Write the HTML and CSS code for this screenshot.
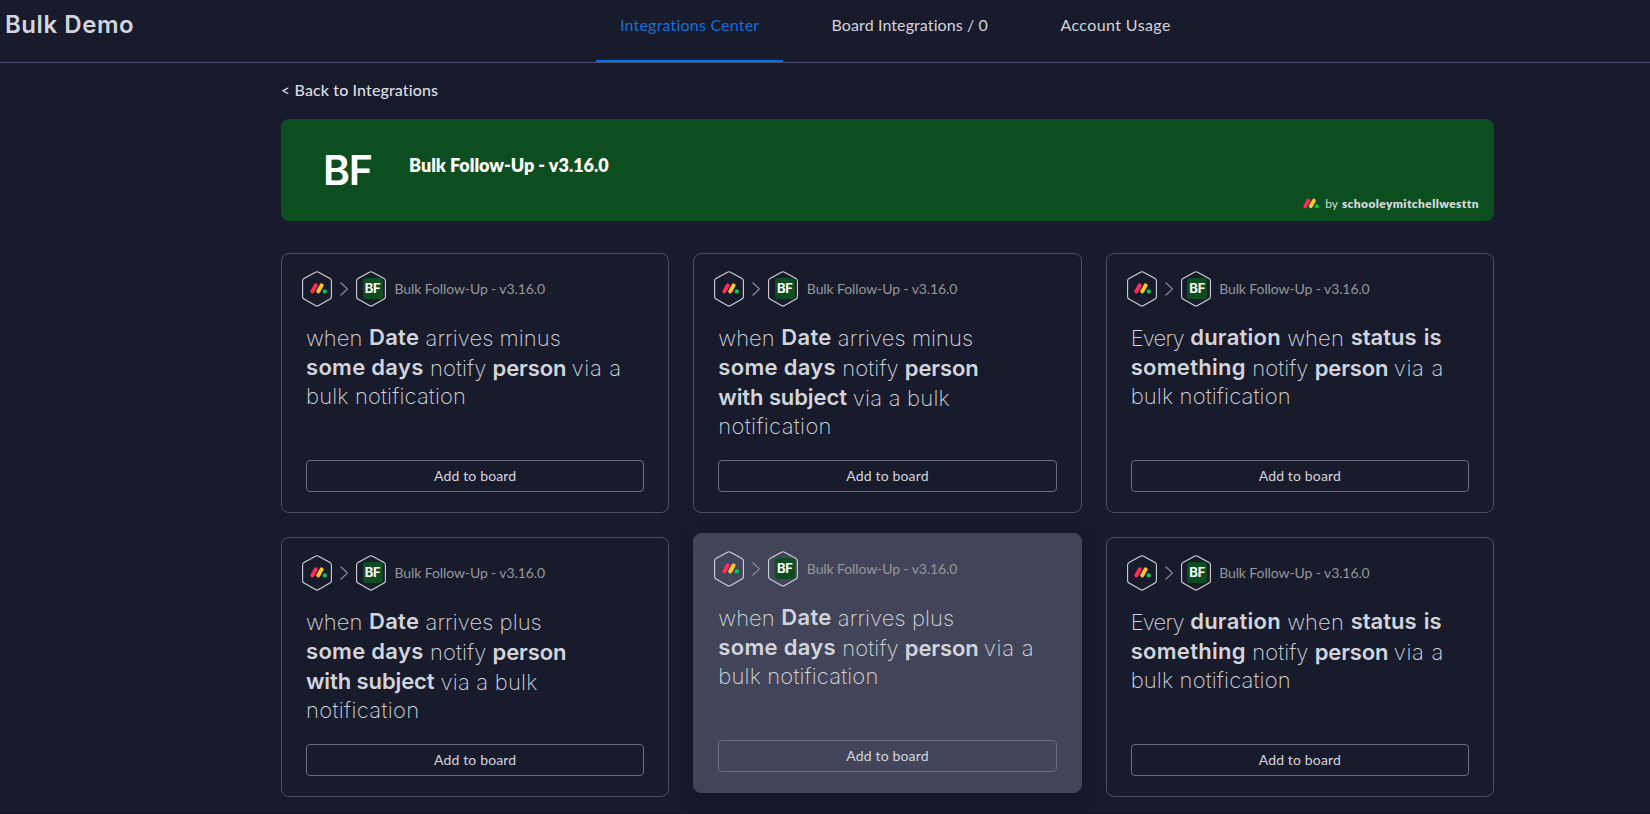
FILE: index.html
```html
<!DOCTYPE html>
<html lang="en">
<head>
<meta charset="utf-8">
<title>Bulk Demo</title>
<link rel="stylesheet" href="styles.css">
</head>
<body>
<svg class="defs" width="0" height="0">
  <symbol id="logo" viewBox="0 0 17 11">
    <path d="M2.4 8.4 5.7 2.4" stroke="#ff2d57" stroke-width="4" stroke-linecap="round"/>
    <path d="M8.3 8.4 11.6 2.4" stroke="#ffc52e" stroke-width="4" stroke-linecap="round"/>
    <circle cx="14.8" cy="8.4" r="2.1" fill="#00d052"/>
  </symbol>
  <symbol id="hex" viewBox="0 0 30 36">
    <path d="M13.4 1.2Q15 .3 16.6 1.2L28 7.5Q29.4 8.3 29.4 9.9V25.7Q29.4 27.3 28 28.1L16.6 34.6Q15 35.5 13.4 34.6L2 28.1Q.6 27.3 .6 25.7V9.9Q.6 8.3 2 7.5Z" fill="none" stroke="#d0d1d6" stroke-width="1.1"/>
  </symbol>
  <symbol id="chevron" viewBox="0 0 8 14">
    <path d="M.5.5 7.5 7 .5 13.5" fill="none" stroke="#8c8d94" stroke-width="1.2"/>
  </symbol>
</svg>
<header class="topbar">
  <h1 class="brand">Bulk Demo</h1>
  <nav class="tabs">
    <a class="tab active">Integrations Center</a>
    <a class="tab">Board Integrations / 0</a>
    <a class="tab usage">Account Usage</a>
  </nav>
</header>
<main class="content">
  <a class="back"><span class="lt">&lt;</span>Back to Integrations</a>
  <section class="banner">
    <div class="initials">BF</div>
    <h2 class="banner-title">Bulk Follow-Up - v3.16.0</h2>
    <div class="author"><svg class="author-logo"><use href="#logo"/></svg><span class="by">by</span><b>schooleymitchellwesttn</b></div>
  </section>
  <section class="grid" id="grid"></section>
</main>
<script src="cards.js"></script>
</body>
</html>
```

FILE: styles.css
```css
* { box-sizing: border-box; }
body { margin: 0; height: 814px; overflow: hidden; background: #181b2c; color: #d3d5dc; font-family: Lato, "Liberation Sans", sans-serif; border-bottom: 1px solid #121422; }
.defs { display: block; }
.topbar { display: grid; grid-template-columns: 596px 1fr; height: 63px; border-bottom: 1px solid #4b4e69; }
.brand { margin: 0; padding: 8px 0 0 5px; font: 600 24px/34px Inter, sans-serif; letter-spacing: .55px; white-space: nowrap; }
.tabs { display: flex; height: 62px; }
.tab { padding: 13px 24px 0; margin-right: 24.5px; font-size: 16px; line-height: 24px; letter-spacing: .1px; white-space: nowrap; }
.tab.active { width: 187px; color: #0f70dd; border-bottom: 2px solid #0073ea; letter-spacing: .2px; }
.tab.usage { letter-spacing: .4px; }
.content { width: 1213px; margin-left: 281px; }
.back { display: flex; height: 56px; padding-top: 15px; font-size: 16px; font-weight: 500; line-height: 24px; letter-spacing: .12px; color: #dcdee4; }
.lt { width: 13.5px; font-size: 15px; }
.banner { display: grid; grid-template-columns: 128px 1fr auto; height: 102px; border-radius: 8px; background: #0c4e20; color: #fff; }
.initials { padding: 26px 0 0 42px; font: 600 41px/50px Inter, sans-serif; letter-spacing: -1.4px; }
.banner-title { margin: 34px 0 0; font-size: 18px; font-weight: 800; line-height: 24px; letter-spacing: -.02px; }
.author { display: flex; align-items: center; align-self: end; height: 20px; margin: 0 15px 8px 0; font-size: 12px; color: #d5dad9; }
.author b { font-weight: 800; letter-spacing: .38px; }
.author-logo { width: 16px; height: 11px; margin-right: 6px; }
.by { margin-right: 4px; }
.grid { display: grid; grid-template-columns: repeat(3, 1fr); gap: 24px; margin-top: 32px; }
.card { display: flex; flex-direction: column; height: 260px; padding: 16px 24px 20px; border: 1px solid #4b4e60; border-radius: 8px; }
.card.hover { background: #424559; border-color: #424559; box-shadow: 0 6px 20px rgba(0, 0, 0, .2); transform: translateY(-4px); }
.card-head { display: flex; align-items: center; height: 37px; margin-left: -4px; }
.hexagon { display: grid; place-items: center; flex: none; width: 30px; height: 36px; }
.hexagon > * { grid-area: 1 / 1; }
.hex { width: 30px; height: 36px; }
.mini-logo { width: 17px; height: 11px; margin-left: 2px; }
.chevron { width: 8px; height: 14px; margin: 0 8px; }
.badge { width: 20px; height: 21px; margin-left: 3px; border-radius: 3px; background: #0c4e20; color: #fff; font: 700 13px/21px Inter, sans-serif; letter-spacing: -.3px; text-align: center; }
.app { margin-left: 8.5px; font-size: 14px; letter-spacing: -.1px; color: #96979a; white-space: nowrap; }
.sentence { margin-top: 16px; font: 250 22px/30px Inter, sans-serif; white-space: nowrap; }
.line { display: flex; height: 30px; }
.line.plain { height: 26px; line-height: 26px; }
.word { flex: none; }
.strong { font-weight: 600; }
.raised { line-height: 28px; }
.add { width: 100%; height: 32px; margin-top: auto; padding: 0; border: 1px solid #6b6e80; border-radius: 4px; background: none; color: #d3d5dc; font: 400 14px/24px Lato, sans-serif; letter-spacing: .15px; }
```

FILE: cards.js
```js
// Each word group: [text, advance to the next group, letter spacing, style]
const R = 'strong raised';
const S = 'strong';
const when = ['when', 63, 0, ''];
const date = ['Date', 56.5, 0.3, R];
const someDays = ['some days', 124, 0.3, R];
const notify = ['notify', 62.5, 0.1, ''];
const person = ['person', 79, -0.1, S];
const viaA = ['via a', 50, 0.7, ''];
const bulkNotification = [['bulk notification', 170, 0.15, '']];

const short = verb => [[when, date, [verb, 136, 0.05, '']], [someDays, notify, person, viaA], bulkNotification];
const withSubject = verb => [
  [when, date, [verb, 136, 0.05, '']],
  [someDays, notify, person],
  [['with subject', 134.5, -0.1, R], ['via a bulk', 98, 0.2, '']],
  [['notification', 120, 0.35, '']]
];
const every = [
  [['Every', 59.5, -0.85, ''], ['duration', 97, 0.25, R], ['when', 63.5, 0.1, ''], ['status', 73, 0, R], ['is', 20, 0, R]],
  [['something', 121.5, 0.3, R], ['notify', 62.5, 0.1, ''], person, viaA],
  bulkNotification
];
const cards = [short('arrives minus'), withSubject('arrives minus'), every,
  withSubject('arrives plus'), short('arrives plus'), every];

const word = ([text, advance, spacing, style]) =>
  `<span class="word ${style}" style="width:${advance}px;letter-spacing:${spacing}px">${text}</span>`;
const line = words =>
  `<div class="line${words.some(w => w[3]) ? '' : ' plain'}">${words.map(word).join('')}</div>`;

document.getElementById('grid').innerHTML = cards.map((lines, i) => `
  <article class="card${i === 4 ? ' hover' : ''}">
    <div class="card-head">
      <div class="hexagon"><svg class="hex"><use href="#hex"/></svg><svg class="mini-logo"><use href="#logo"/></svg></div>
      <svg class="chevron"><use href="#chevron"/></svg>
      <div class="hexagon"><svg class="hex"><use href="#hex"/></svg><span class="badge">BF</span></div>
      <span class="app">Bulk Follow-Up - v3.16.0</span>
    </div>
    <div class="sentence">${lines.map(line).join('')}</div>
    <button class="add">Add to board</button>
  </article>`).join('');
```
